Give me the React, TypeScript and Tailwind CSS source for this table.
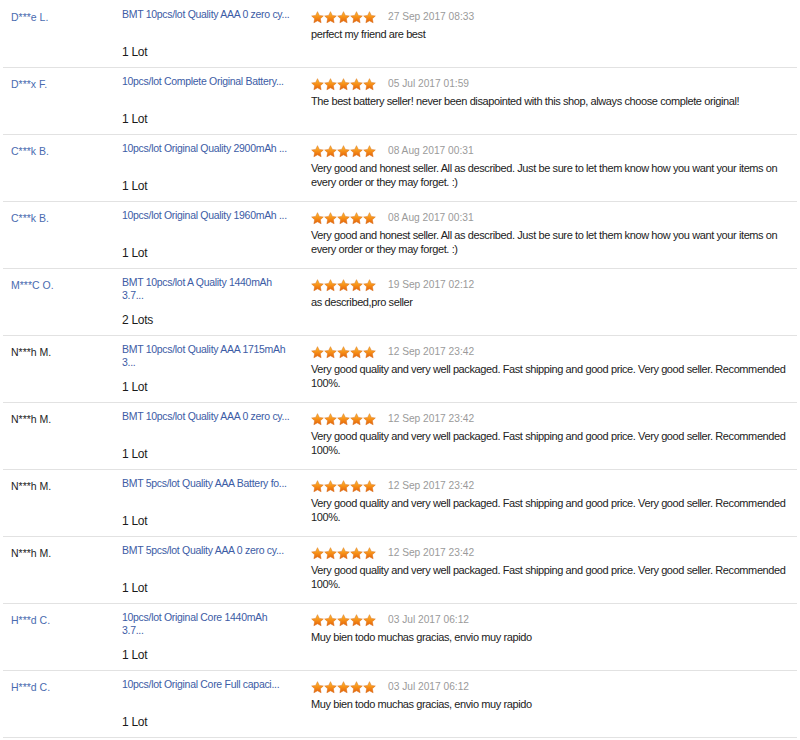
import React from 'react';

interface Review {
  name: string;
  dark?: boolean;
  product: string;
  qty: string;
  date: string;
  text: string;
}

const good = 'Very good quality and very well packaged. Fast shipping and good price. Very good seller. Recommended 100%.';
const honest =
  'Very good and honest seller. All as described. Just be sure to let them know how you want your items on every order or they may forget. :)';
const muy = 'Muy bien todo muchas gracias, envio muy rapido';

// titles are cut by the shop with "...", long ones break onto a second line
const reviews: Review[] = [
  { name: 'D***e L.', product: 'BMT 10pcs/lot Quality AAA 0 zero cy...', qty: '1 Lot', date: '27 Sep 2017 08:33', text: 'perfect my friend are best' },
  {
    name: 'D***x F.',
    product: '10pcs/lot Complete Original Battery...',
    qty: '1 Lot',
    date: '05 Jul 2017 01:59',
    text: 'The best battery seller! never been disapointed with this shop, always choose complete original!',
  },
  { name: 'C***k B.', product: '10pcs/lot Original Quality 2900mAh ...', qty: '1 Lot', date: '08 Aug 2017 00:31', text: honest },
  { name: 'C***k B.', product: '10pcs/lot Original Quality 1960mAh ...', qty: '1 Lot', date: '08 Aug 2017 00:31', text: honest },
  { name: 'M***C O.', product: 'BMT 10pcs/lot A Quality 1440mAh\n3.7...', qty: '2 Lots', date: '19 Sep 2017 02:12', text: 'as described,pro seller' },
  { name: 'N***h M.', dark: true, product: 'BMT 10pcs/lot Quality AAA 1715mAh\n3...', qty: '1 Lot', date: '12 Sep 2017 23:42', text: good },
  { name: 'N***h M.', dark: true, product: 'BMT 10pcs/lot Quality AAA 0 zero cy...', qty: '1 Lot', date: '12 Sep 2017 23:42', text: good },
  { name: 'N***h M.', dark: true, product: 'BMT 5pcs/lot Quality AAA Battery fo...', qty: '1 Lot', date: '12 Sep 2017 23:42', text: good },
  { name: 'N***h M.', dark: true, product: 'BMT 5pcs/lot Quality AAA 0 zero cy...', qty: '1 Lot', date: '12 Sep 2017 23:42', text: good },
  { name: 'H***d C.', product: '10pcs/lot Original Core 1440mAh\n3.7...', qty: '1 Lot', date: '03 Jul 2017 06:12', text: muy },
  { name: 'H***d C.', product: '10pcs/lot Original Core Full capaci...', qty: '1 Lot', date: '03 Jul 2017 06:12', text: muy },
];

const Star = () => (
  <svg width="13" height="13" viewBox="0 0 24 24" className="block">
    <defs>
      <linearGradient id="starGrad" x1="0" y1="0" x2="0" y2="1">
        <stop offset="0%" stopColor="#ffbf33" />
        <stop offset="55%" stopColor="#f58a16" />
        <stop offset="100%" stopColor="#e0600a" />
      </linearGradient>
    </defs>
    <path
      d="M12 1.2l3.3 6.9 7.5 1-5.5 5.2 1.4 7.5L12 18.2l-6.7 3.6 1.4-7.5L1.2 9.1l7.5-1z"
      fill="url(#starGrad)"
      stroke="#d5650c"
      strokeWidth="0.8"
      strokeLinejoin="round"
    />
  </svg>
);

const Row = ({ r }: { r: Review }) => (
  <div className="flex h-[67px] border-b border-[#e2e2e2]">
    <div
      className={`w-[110px] shrink-0 pl-[8px] pt-[9px] text-[10.5px] leading-[14px] ${
        r.dark ? 'text-[#1e1e1e]' : 'text-[#4a6bb0]'
      }`}
    >
      {r.name}
    </div>
    <div className="w-[198px] shrink-0 flex flex-col pl-[9px] pt-[7px]">
      <div className="h-[36px] w-[185px] whitespace-pre-line text-[10.5px] leading-[13px] tracking-[-0.3px] text-[#3c5ca5]">
        {r.product}
      </div>
      <div className="text-[12px] leading-[16px] tracking-[-0.3px] text-[#1a1a1a]">{r.qty}</div>
    </div>
    <div className="flex-1 pt-[9px] pr-[4px]">
      <div className="flex items-center h-[14px]">
        <div className="flex">
          <Star />
          <Star />
          <Star />
          <Star />
          <Star />
        </div>
        <span className="ml-[12px] text-[10.2px] text-[#9a9a9a]">{r.date}</span>
      </div>
      <p className="mt-[3px] text-[11px] leading-[14px] tracking-[-0.4px] text-[#222]">{r.text}</p>
    </div>
  </div>
);

export default function App() {
  return (
    <div className="w-[800px] h-[740px] overflow-hidden bg-white font-['Liberation_Sans',Arial,sans-serif]">
      <div className="mx-[3px] pt-[1px]">
        {reviews.map((r, i) => (
          <Row key={i} r={r} />
        ))}
      </div>
    </div>
  );
}
